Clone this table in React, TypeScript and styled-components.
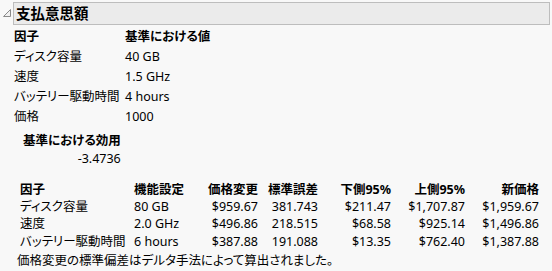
import React from "react";
import styled, { createGlobalStyle } from "styled-components";

const GlobalStyle = createGlobalStyle`
  html, body {
    margin: 0;
    padding: 0;
    background: #f8f8f8;
  }
  body {
    font-family: "Noto Sans", "Noto Sans CJK JP", sans-serif;
    font-size: 12.5px;
    color: #000;
    font-feature-settings: "palt";
  }
`;

const Page = styled.div`
  width: 552px;
  height: 271px;
  box-sizing: border-box;
  padding: 2px 2px 0 3px;
  overflow: hidden;
`;

const HeaderRow = styled.div`
  display: flex;
  align-items: flex-start;
`;

const Toggle = styled.svg`
  flex: 0 0 10px;
  width: 10px;
  height: 23px;
`;

const HeaderBox = styled.div`
  flex: 1;
  height: 23px;
  box-sizing: border-box;
  border: 1px solid #bdbdbd;
  background: #ebebeb;
  padding-left: 2px;
  display: flex;
  align-items: center;
`;

const Title = styled.span`
  font-size: 14.5px;
  font-weight: 700;
  line-height: 21px;
`;

const Body = styled.div`
  margin-left: 11px;
  display: flex;
  flex-direction: column;
  align-items: flex-start;
`;

const BaseTable = styled.div`
  margin-top: 1px;
  display: grid;
  grid-template-columns: 111px auto;
  grid-template-rows: 21px;
  grid-auto-rows: 20px;
  align-items: center;
  line-height: 20px;
  white-space: nowrap;
`;

const Cell = styled.div<{ $bold?: boolean; $right?: boolean }>`
  font-weight: ${(p) => (p.$bold ? 700 : 400)};
  text-align: ${(p) => (p.$right ? "right" : "left")};
  white-space: nowrap;
`;

const Utility = styled.div`
  margin-top: 5px;
  margin-left: 9px;
  display: inline-grid;
  grid-auto-rows: 18px;
  align-items: center;
  line-height: 18px;
`;

const PriceTable = styled.div`
  margin-top: 13px;
  margin-left: 6px;
  display: grid;
  grid-template-columns: 114px 62px 62px 60px 73px 74px 74px;
  grid-auto-rows: 17.2px;
  align-items: center;
  line-height: 17px;
`;

const Footnote = styled.div`
  margin-top: 2px;
  margin-left: 3px;
  line-height: 18px;
  white-space: nowrap;
`;

const baseRows = [
  ["ディスク容量", "40 GB"],
  ["速度", "1.5 GHz"],
  ["バッテリー駆動時間", "4 hours"],
  ["価格", "1000"],
];

const priceHeaders = ["因子", "機能設定", "価格変更", "標準誤差", "下側95%", "上側95%", "新価格"];

const priceRows = [
  ["ディスク容量", "80 GB", "$959.67", "381.743", "$211.47", "$1,707.87", "$1,959.67"],
  ["速度", "2.0 GHz", "$496.86", "218.515", "$68.58", "$925.14", "$1,496.86"],
  ["バッテリー駆動時間", "6 hours", "$387.88", "191.088", "$13.35", "$762.40", "$1,387.88"],
];

export default function App() {
  return (
    <>
      <GlobalStyle />
      <Page>
        <HeaderRow>
          <Toggle viewBox="0 0 10 23">
            <path d="M7.5 7.5 L7.5 14.5 L0.5 14.5 Z" fill="#f0f0f0" stroke="#8a8a8a" strokeWidth="1" />
          </Toggle>
          <HeaderBox>
            <Title>支払意思額</Title>
          </HeaderBox>
        </HeaderRow>
        <Body>
          <BaseTable>
            <Cell $bold>因子</Cell>
            <Cell $bold>基準における値</Cell>
            {baseRows.map(([a, b]) => (
              <React.Fragment key={a}>
                <Cell>{a}</Cell>
                <Cell>{b}</Cell>
              </React.Fragment>
            ))}
          </BaseTable>
          <Utility>
            <Cell $bold>基準における効用</Cell>
            <Cell $right>-3.4736</Cell>
          </Utility>
          <PriceTable>
            {priceHeaders.map((h, i) => (
              <Cell key={h} $bold $right={i >= 2}>
                {h}
              </Cell>
            ))}
            {priceRows.map((row) =>
              row.map((v, i) => (
                <Cell key={row[0] + i} $right={i >= 2}>
                  {v}
                </Cell>
              ))
            )}
          </PriceTable>
          <Footnote>価格変更の標準偏差はデルタ手法によって算出されました。</Footnote>
        </Body>
      </Page>
    </>
  );
}
